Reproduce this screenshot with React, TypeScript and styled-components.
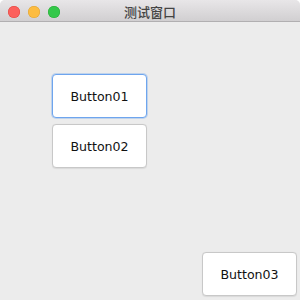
import React from "react";
import styled, { createGlobalStyle } from "styled-components";

const Global = createGlobalStyle`
  html, body { margin: 0; padding: 0; background: #ffffff; }
  * { box-sizing: border-box; }
`;

const Window = styled.div`
  width: 300px;
  height: 300px;
  display: flex;
  flex-direction: column;
  background: #ececec;
  border-radius: 5px 5px 0 0;
  overflow: hidden;
  font-family: "Lucida Grande", "DejaVu Sans", "Noto Sans CJK SC", sans-serif;
`;

const TitleBar = styled.div`
  position: relative;
  height: 22px;
  flex: none;
  display: flex;
  align-items: flex-start;
  padding: 6px 0 0 8px;
  gap: 8px;
  background: linear-gradient(#e8e6e8, #d1cfd1);
  border-bottom: 1px solid #b1afb1;
`;

const Light = styled.span<{ $fill: string; $edge: string }>`
  width: 12px;
  height: 12px;
  border-radius: 50%;
  background: ${(p) => p.$fill};
  box-shadow: inset 0 0 0 0.5px ${(p) => p.$edge};
`;

const Title = styled.div`
  position: absolute;
  left: 0;
  right: 0;
  top: 0;
  height: 23px;
  display: flex;
  align-items: center;
  justify-content: center;
  font-family: "Noto Sans CJK SC", sans-serif;
  font-size: 13px;
  font-weight: 500;
  color: #444444;
  pointer-events: none;
`;

const Content = styled.div`
  flex: 1;
  display: flex;
  flex-direction: column;
  padding: 52px 3px 4px 52px;
`;

const Group = styled.div`
  display: flex;
  flex-direction: column;
  gap: 6px;
`;

const Button = styled.button<{ $focused?: boolean }>`
  width: 95px;
  height: 44px;
  padding: 0;
  background: #ffffff;
  border: 1px solid ${(p) => (p.$focused ? "#6ea5ee" : "#c8c8c8")};
  border-radius: 4px;
  box-shadow: ${(p) =>
    p.$focused
      ? "0 0 0 1px rgba(110,165,238,0.35)"
      : "0 0.5px 1px rgba(0,0,0,0.08)"};
  font-family: "Lucida Grande", "DejaVu Sans", sans-serif;
  font-size: 12.6px;
  color: #111111;
  display: flex;
  align-items: center;
  justify-content: center;
  outline: none;
`;

const Corner = styled(Button)`
  margin-top: auto;
  align-self: flex-end;
`;

export default function App() {
  return (
    <>
      <Global />
      <Window>
        <TitleBar>
          <Light $fill="#fc605c" $edge="#e0443e" />
          <Light $fill="#fdbc40" $edge="#dea236" />
          <Light $fill="#34c84a" $edge="#27aa35" />
          <Title>测试窗口</Title>
        </TitleBar>
        <Content>
          <Group>
            <Button $focused>Button01</Button>
            <Button>Button02</Button>
          </Group>
          <Corner>Button03</Corner>
        </Content>
      </Window>
    </>
  );
}
